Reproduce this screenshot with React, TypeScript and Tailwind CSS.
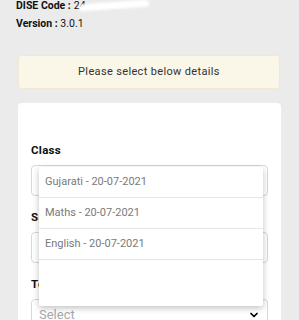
import React from 'react';
import { ChevronDown } from 'lucide-react';

const options = ['Gujarati - 20-07-2021', 'Maths - 20-07-2021', 'English - 20-07-2021'];

const Field: React.FC<{ label: string; placeholder?: string }> = ({ label, placeholder }) => (
  <div className="flex flex-col">
    <label className="text-[11.5px] leading-[14px] font-bold tracking-[0.3px] text-[#111] mb-[8px]">{label}</label>
    <div className="h-[31px] rounded-[4px] border border-[#d9d9d9] bg-white flex items-center justify-between pl-[7px] pr-[7px]">
      <span className="text-[13px] text-[#a8a8a8]">{placeholder}</span>
      {placeholder && <ChevronDown size={12} strokeWidth={3.5} className="text-black" />}
    </div>
  </div>
);

export default function App() {
  return (
    <div className="w-[299px] h-[320px] overflow-hidden bg-[#ebebeb] font-['Roboto',sans-serif]">
      <div className="flex flex-col gap-[7px] pl-[16px] text-[10.5px] leading-[11px] text-[#111]">
        <div className="flex items-center">
          <span className="font-bold">DISE Code :</span>
          <span className="ml-[3px]">24</span>
          <span className="inline-block ml-[-7px] w-[70px] h-[7px] bg-white rounded-full blur-[1px] -rotate-[4deg]" />
        </div>
        <div>
          <span className="font-bold">Version :</span> <span>3.0.1</span>
        </div>
      </div>

      <div className="ml-[18px] mt-[26px] w-[262px] h-[34px] rounded-[3px] bg-[#faf6e8] border border-[#efe9d4] flex items-center justify-center">
        <span className="text-[11px] tracking-[0.35px] text-[#333]">Please select below details</span>
      </div>

      <div className="relative ml-[18px] mt-[14px] w-[263px] h-[260px] rounded-[4px] bg-white px-[13px] pt-[40px] flex flex-col gap-[14px]">
        <Field label="Class" />
        <Field label="Subject" />
        <Field label="Teacher" placeholder="Select" />

        <div className="absolute left-[21px] top-[64px] w-[224px] bg-white rounded-[2px] shadow-[0_2px_6px_rgba(0,0,0,0.25)] flex flex-col">
          {options.map((o) => (
            <div key={o} className="h-[31px] border-b border-[#e6e6e6] flex items-center pl-[6px] text-[11px] text-[#7a7a7a]">
              {o}
            </div>
          ))}
          <div className="h-[46px]" />
        </div>
      </div>
    </div>
  );
}
